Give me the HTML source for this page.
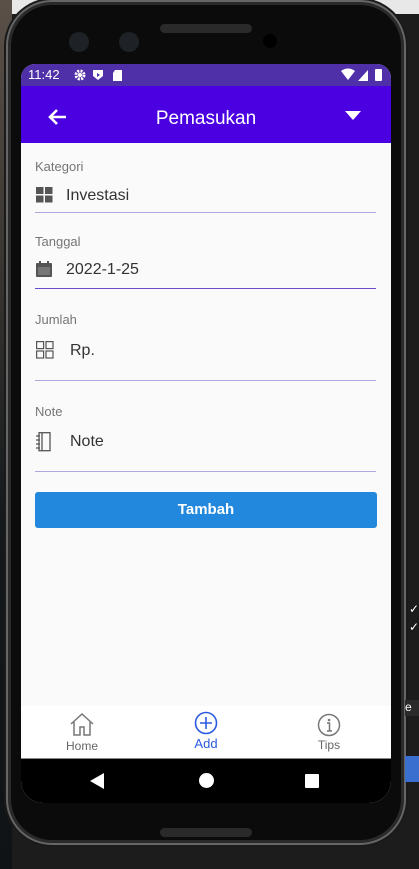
<!DOCTYPE html>
<html><head><meta charset="utf-8"><style>
*{margin:0;padding:0;box-sizing:border-box}
body{width:419px;height:869px;overflow:hidden;background:#1c1c1c;font-family:"Liberation Sans",sans-serif;position:relative}
.bgl{position:absolute;left:0;top:0;width:12px;height:869px;background:linear-gradient(#5a5048,#3a3632 30%,#14191c 60%,#101316)}
.bgt{position:absolute;left:0;top:0;width:419px;height:14px;background:#e8e8e8}
.phone{position:absolute;left:6px;top:0;width:400px;height:845px;border-radius:46px;background:#0b0b0b;border:2px solid #666;box-shadow:0 0 0 2px #1a1a1a,inset 0 0 0 3px #2a2a2a}
.screen{position:absolute;left:21px;top:64px;width:370px;height:739px;border-radius:14px 14px 22px 22px;overflow:hidden;background:#fafafa}
.status{height:22px;background:#5030a8;color:#fff;font-size:13px;line-height:22px;padding-left:7px;position:relative}
.app{height:57px;background:#4a00e0;color:#fff;position:relative}
.title{position:absolute;left:0;right:0;top:22px;text-align:center;font-size:19px}
.lbl{position:absolute;left:14px;font-size:13px;color:#757575}
.val{position:absolute;left:45px;font-size:16px;color:#333}
.line{position:absolute;left:14px;width:341px;height:1px;background:#b3a6e0}
.btn{position:absolute;left:14px;top:428px;width:342px;height:36px;background:#2288dd;border-radius:3px;color:#fff;font-weight:bold;font-size:15px;text-align:center;line-height:36px}
.nav{position:absolute;left:0;top:642px;width:370px;height:52px;background:#fff}
.sys{position:absolute;left:0;top:694px;width:370px;height:45px;background:#000;border-top:1px solid #888}
.ni{position:absolute;text-align:center;font-size:12px;color:#666;width:60px}
</style></head><body>
<div class="bgt"></div><div class="bgl"></div>
<div class="phone"></div>
<div style="position:absolute;left:160px;top:24px;width:92px;height:9px;border-radius:5px;background:#2a2a2a"></div>
<div style="position:absolute;left:69px;top:32px;width:20px;height:20px;border-radius:50%;background:#1e2226"></div>
<div style="position:absolute;left:119px;top:32px;width:20px;height:20px;border-radius:50%;background:#1e2226"></div>
<div style="position:absolute;left:263px;top:34px;width:14px;height:14px;border-radius:50%;background:#000"></div>
<div style="position:absolute;left:160px;top:828px;width:92px;height:9px;border-radius:5px;background:#2a2a2a"></div>
<div class="screen">
 <div class="status">11:42
  <svg style="position:absolute;left:52px;top:4px" width="60" height="14" viewBox="0 0 60 14"><circle cx="7" cy="7" r="4" fill="none" stroke="#fff" stroke-width="3" stroke-dasharray="2 1.2"/><circle cx="7" cy="7" r="2" fill="#fff"/><path d="M20 2h10v6l-5 4-5-4z" fill="#fff"/><path d="M24 5l3 2-3 2z" fill="#5030a8"/><path d="M42 2h7v11h-9v-8z" fill="#fff"/></svg>
  <svg style="position:absolute;right:4px;top:4px" width="46" height="14" viewBox="0 0 46 14"><path d="M0 3q7-5 14 0l-7 9z" fill="#fff"/><path d="M17 13l10-11v11z" fill="#fff"/><rect x="34" y="1" width="7" height="12" rx="1" fill="#fff"/></svg>
 </div>
 <div class="app">
  <svg style="position:absolute;left:26px;top:22px" width="20" height="18" viewBox="0 0 20 18"><path d="M19 9H3M10 2L3 9l7 7" stroke="#fff" stroke-width="2.6" fill="none"/></svg>
  <div class="title">Pemasukan</div>
  <svg style="position:absolute;left:324px;top:25px" width="16" height="10"><path d="M0 0h16l-8 9z" fill="#fff"/></svg>
 </div>
 <div class="lbl" style="top:95px">Kategori</div>
 <svg style="position:absolute;left:15px;top:123px" width="17" height="16"><rect x="0" y="0" width="7.5" height="7" fill="#555"/><rect x="9" y="0" width="7.5" height="7" fill="#555"/><rect x="0" y="8.5" width="7.5" height="7" fill="#555"/><rect x="9" y="8.5" width="7.5" height="7" fill="#555"/></svg>
 <div class="val" style="top:123px">Investasi</div>
 <div class="line" style="top:148px"></div>
 <div class="lbl" style="top:170px">Tanggal</div>
 <svg style="position:absolute;left:15px;top:197px" width="16" height="16"><rect x="0" y="2" width="16" height="14" rx="1" fill="#555"/><rect x="3" y="0" width="2" height="3" fill="#555"/><rect x="11" y="0" width="2" height="3" fill="#555"/><rect x="2" y="6" width="12" height="8" fill="#777"/></svg>
 <div class="val" style="top:197px">2022-1-25</div>
 <div class="line" style="top:224px;background:#6a4ccc"></div>
 <div class="lbl" style="top:248px">Jumlah</div>
 <svg style="position:absolute;left:15px;top:277px" width="18" height="18"><g fill="none" stroke="#555" stroke-width="1.2"><rect x=".6" y=".6" width="7" height="7"/><rect x="10" y=".6" width="7" height="7"/><rect x=".6" y="10" width="7" height="7"/><rect x="10" y="10" width="7" height="7"/></g></svg>
 <div class="val" style="top:278px;left:49px">Rp.</div>
 <div class="line" style="top:316px"></div>
 <div class="lbl" style="top:340px">Note</div>
 <svg style="position:absolute;left:15px;top:368px" width="16" height="20"><g fill="none" stroke="#555" stroke-width="1.3"><rect x="3" y=".7" width="11" height="18"/><path d="M0 4h4M0 8h4M0 12h4M0 16h4M6 1v18"/></g></svg>
 <div class="val" style="top:369px;left:49px">Note</div>
 <div class="line" style="top:407px;background:#b3a6e0"></div>
 <div class="btn">Tambah</div>
 <div class="nav">
  <div class="ni" style="left:31px;top:6px"><svg width="26" height="24" viewBox="0 0 26 24"><path d="M2 12L13 2l11 10M5 10v13h6v-8h4v8h6V10" fill="none" stroke="#777" stroke-width="1.5"/></svg><div style="margin-top:0px">Home</div></div>
  <div class="ni" style="left:155px;top:5px;color:#2a5ae0;font-size:13px"><svg width="24" height="24" viewBox="0 0 24 24"><circle cx="12" cy="12" r="10.5" fill="none" stroke="#2a5ae0" stroke-width="1.6"/><path d="M12 6v12M6 12h12" stroke="#2a5ae0" stroke-width="1.6"/></svg><div style="margin-top:-2px">Add</div></div>
  <div class="ni" style="left:278px;top:7px"><svg width="24" height="24" viewBox="0 0 24 24"><circle cx="12" cy="12" r="10.5" fill="none" stroke="#777" stroke-width="1.5"/><circle cx="12" cy="7" r="1.3" fill="#777"/><path d="M10 10h2.5v8M10 18h5" stroke="#777" stroke-width="1.5" fill="none"/></svg><div style="margin-top:-2px">Tips</div></div>
 </div>
 <div class="sys">
  <svg style="position:absolute;left:69px;top:14px" width="16" height="16"><path d="M14 0v16L0 8z" fill="#fff"/></svg>
  <div style="position:absolute;left:178px;top:14px;width:15px;height:15px;border-radius:50%;background:#fff"></div>
  <div style="position:absolute;left:284px;top:15px;width:14px;height:14px;background:#fff;border-radius:1px"></div>
 </div>
</div>
<div style="position:absolute;left:409px;top:600px;color:#fff;font-size:12px;line-height:18px">✓<br>✓</div>
<div style="position:absolute;left:405px;top:700px;width:14px;height:16px;background:#2a2a2a;color:#fff;font-size:12px">e</div>
<div style="position:absolute;left:405px;top:756px;width:14px;height:26px;background:#3a6fd0"></div>
</body></html>
